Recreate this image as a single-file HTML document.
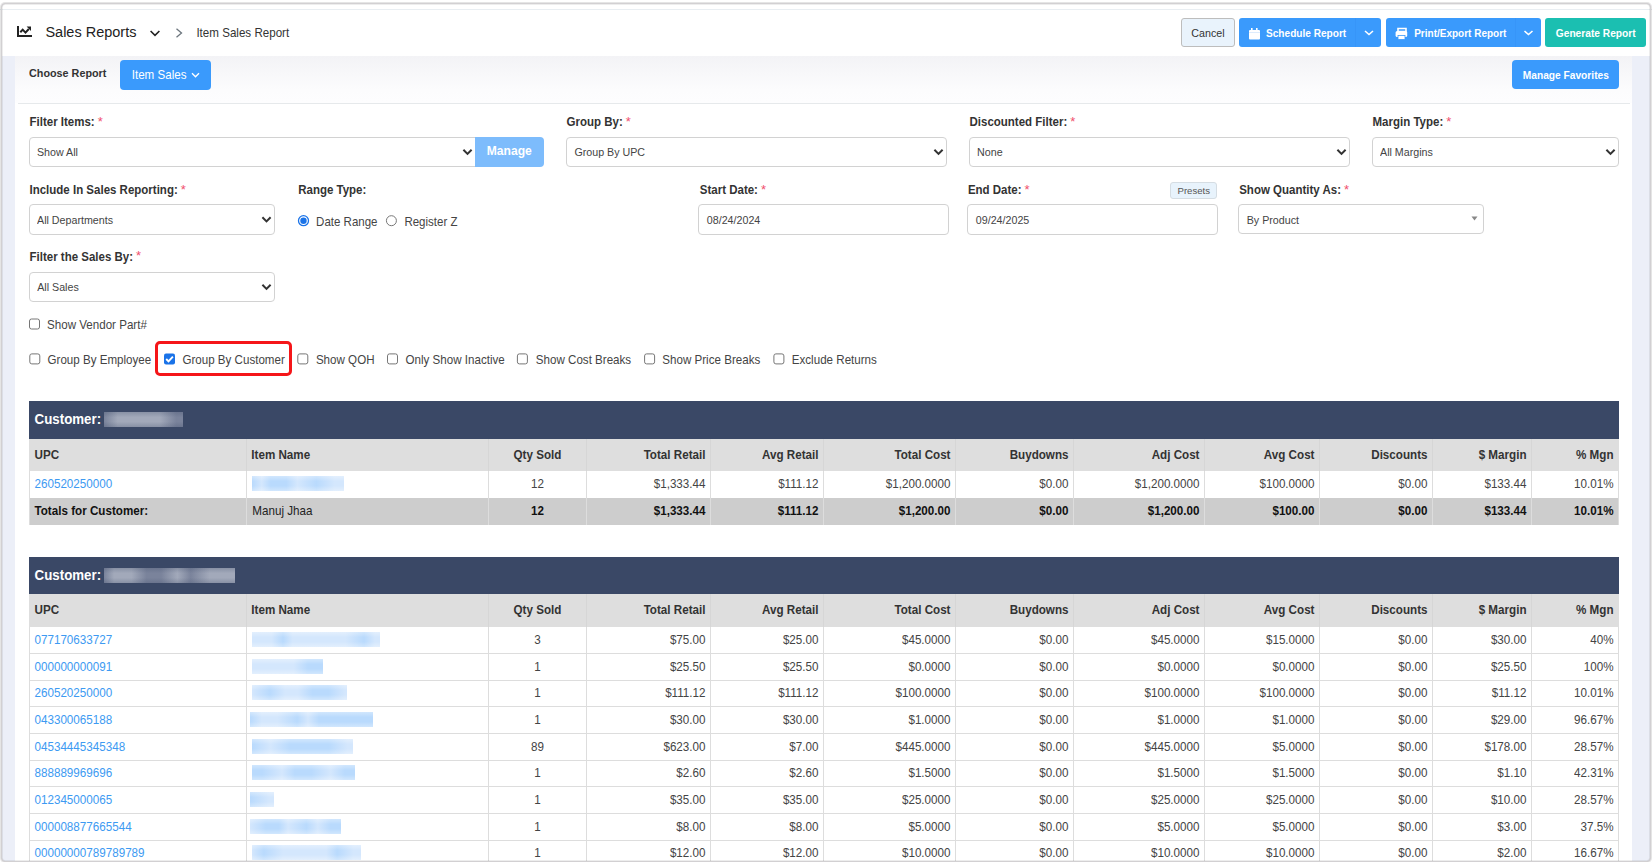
<!DOCTYPE html><html><head><meta charset="utf-8"><title>Item Sales Report</title><style>
*{box-sizing:border-box;margin:0;padding:0}
html,body{width:1652px;height:862px;overflow:hidden;background:#fff;font-family:"Liberation Sans",sans-serif}
.t{position:absolute;white-space:nowrap;line-height:1}
.r{position:absolute}
svg{position:absolute;overflow:visible}
</style></head><body>
<div class="r" style="left:2px;top:56px;width:1648px;height:805px;background:#eceff8"></div>
<div class="r" style="left:15px;top:56px;width:1617px;height:805px;background:#fff"></div>
<div class="r" style="left:15px;top:56px;width:1617px;height:47px;background:linear-gradient(#f3f3f6,#fcfcfd 72%,#fdfdfe)"></div>
<div class="r" style="left:18px;top:103px;width:1612px;height:1px;background:#e6e9eb"></div>
<div class="r" style="left:0px;top:9px;width:1652px;height:1px;background:#e9eef2"></div>
<div class="r" style="left:1px;top:3px;width:1650px;height:859px;border:1px solid #cfcdd0;border-radius:4px;"></div>
<svg style="left:0;top:0" width="1652" height="60"><path d="M18 26 V36 H32" fill="none" stroke="#222" stroke-width="2"/><path d="M20.3 32.2 L22.7 29.6 L25.5 32.6 L28.8 29" fill="none" stroke="#222" stroke-width="2"/><path d="M26.6 26.6 H31 V31 Z" fill="#222"/><path d="M150.6 31 L155 35.4 L159.4 31" fill="none" stroke="#222" stroke-width="1.6"/><path d="M176.5 28.8 L181.5 33 L176.5 37.2" fill="none" stroke="#6c757d" stroke-width="1.3"/></svg>
<div class="t" style="left:45.40px;top:24px;font-size:14.5px;line-height:16px;color:#222;transform:scaleY(1.060);transform-origin:0 13px;">Sales Reports</div>
<div class="t" style="left:196.40px;top:27px;font-size:11.6px;line-height:12px;color:#333;transform:scaleY(1.084);transform-origin:0 10px;">Item Sales Report</div>
<div class="r" style="left:1181px;top:18px;width:54px;height:29px;background:#e9f3fc;border:1px solid #bdbdbd;border-radius:3px"></div>
<div class="t" style="left:1191.30px;top:27px;font-size:10.7px;line-height:12px;color:#333;transform:scaleY(1.044);transform-origin:0 10px;">Cancel</div>
<div class="r" style="left:1239px;top:18px;width:142px;height:29px;background:#3a9afc;border-radius:3px"></div>
<div class="r" style="left:1355px;top:18px;width:1px;height:29px;background:#3795f8"></div>
<div class="t" style="left:1266.00px;top:28px;font-size:10.1px;line-height:11px;color:#fff;font-weight:bold;transform:scaleY(1.106);transform-origin:0 9px;">Schedule Report</div>
<div class="r" style="left:1386px;top:18px;width:155px;height:29px;background:#3a9afc;border-radius:3px"></div>
<div class="r" style="left:1515px;top:18px;width:1px;height:29px;background:#3795f8"></div>
<div class="t" style="left:1414.20px;top:28px;font-size:10.0px;line-height:11px;color:#fff;font-weight:bold;transform:scaleY(1.117);transform-origin:0 9px;">Print/Export Report</div>
<div class="r" style="left:1545px;top:18px;width:101px;height:29px;background:#1bbfb1;border-radius:3px"></div>
<div class="t" style="left:1555.80px;top:28px;font-size:10.2px;line-height:11px;color:#fff;font-weight:bold;transform:scaleY(1.095);transform-origin:0 9px;">Generate Report</div>
<svg style="left:0;top:0" width="1652" height="60"><rect x="1249" y="30" width="11" height="9.5" rx="1" fill="#fff"/><rect x="1251" y="28" width="1.6" height="3" fill="#fff"/><rect x="1256" y="28" width="1.6" height="3" fill="#fff"/><rect x="1249" y="32" width="11" height="0.7" fill="#cfe4fd"/><path d="M1365 31 L1369 34.5 L1373 31" fill="none" stroke="#fff" stroke-width="1.6"/><path d="M1398 28.5 h8 v3 h-8z" fill="none" stroke="#fff" stroke-width="1.6"/><rect x="1395.6" y="31" width="11.6" height="6" rx="1.5" fill="#fff"/><rect x="1398" y="35.5" width="7" height="4" fill="#fff" stroke="#3a9afc" stroke-width="0.8"/><path d="M1524.5 31 L1528.5 34.5 L1532.5 31" fill="none" stroke="#fff" stroke-width="1.6"/></svg>
<div class="t" style="left:29.00px;top:67px;font-size:10.8px;line-height:12px;color:#333;font-weight:bold;transform:scaleY(1.035);transform-origin:0 10px;">Choose Report</div>
<div class="r" style="left:120px;top:60px;width:91px;height:30px;background:#3a9afc;border-radius:4px"></div>
<div class="t" style="left:131.70px;top:69px;font-size:11.6px;line-height:12px;color:#fff;transform:scaleY(1.084);transform-origin:0 10px;">Item Sales</div>
<svg style="left:0;top:0" width="400" height="100"><path d="M192 73.3 L195.5 76.7 L199 73.3" fill="none" stroke="#fff" stroke-width="1.4"/></svg>
<div class="r" style="left:1512px;top:60px;width:107px;height:29px;background:#3a9afc;border-radius:4px"></div>
<div class="t" style="left:1522.80px;top:70px;font-size:10.2px;line-height:11px;color:#fff;font-weight:bold;transform:scaleY(1.095);transform-origin:0 9px;">Manage Favorites</div>
<div class="t" style="left:29.50px;top:116px;font-size:11.5px;line-height:12px;color:#333;font-weight:bold;transform:scaleY(1.093);transform-origin:0 10px;">Filter Items:</div>
<div class="t" style="left:97.68px;top:114px;font-size:13px;line-height:15px;color:#f0506e;transform:scaleY(1.074);transform-origin:0 12px;transform:none">*</div>
<div class="t" style="left:566.50px;top:116px;font-size:11.5px;line-height:12px;color:#333;font-weight:bold;transform:scaleY(1.093);transform-origin:0 10px;">Group By:</div>
<div class="t" style="left:625.72px;top:114px;font-size:13px;line-height:15px;color:#f0506e;transform:scaleY(1.074);transform-origin:0 12px;transform:none">*</div>
<div class="t" style="left:969.50px;top:116px;font-size:11.5px;line-height:12px;color:#333;font-weight:bold;transform:scaleY(1.093);transform-origin:0 10px;">Discounted Filter:</div>
<div class="t" style="left:1070.26px;top:114px;font-size:13px;line-height:15px;color:#f0506e;transform:scaleY(1.074);transform-origin:0 12px;transform:none">*</div>
<div class="t" style="left:1372.50px;top:116px;font-size:11.5px;line-height:12px;color:#333;font-weight:bold;transform:scaleY(1.093);transform-origin:0 10px;">Margin Type:</div>
<div class="t" style="left:1446.21px;top:114px;font-size:13px;line-height:15px;color:#f0506e;transform:scaleY(1.074);transform-origin:0 12px;transform:none">*</div>
<div class="t" style="left:29.50px;top:184px;font-size:11.5px;line-height:12px;color:#333;font-weight:bold;transform:scaleY(1.093);transform-origin:0 10px;">Include In Sales Reporting:</div>
<div class="t" style="left:180.74px;top:182px;font-size:13px;line-height:15px;color:#f0506e;transform:scaleY(1.074);transform-origin:0 12px;transform:none">*</div>
<div class="t" style="left:298.20px;top:184px;font-size:11.5px;line-height:12px;color:#333;font-weight:bold;transform:scaleY(1.093);transform-origin:0 10px;">Range Type:</div>
<div class="t" style="left:699.80px;top:184px;font-size:11.5px;line-height:12px;color:#333;font-weight:bold;transform:scaleY(1.093);transform-origin:0 10px;">Start Date:</div>
<div class="t" style="left:760.95px;top:182px;font-size:13px;line-height:15px;color:#f0506e;transform:scaleY(1.074);transform-origin:0 12px;transform:none">*</div>
<div class="t" style="left:967.90px;top:184px;font-size:11.5px;line-height:12px;color:#333;font-weight:bold;transform:scaleY(1.093);transform-origin:0 10px;">End Date:</div>
<div class="t" style="left:1024.57px;top:182px;font-size:13px;line-height:15px;color:#f0506e;transform:scaleY(1.074);transform-origin:0 12px;transform:none">*</div>
<div class="t" style="left:1239.20px;top:184px;font-size:11.5px;line-height:12px;color:#333;font-weight:bold;transform:scaleY(1.093);transform-origin:0 10px;">Show Quantity As:</div>
<div class="t" style="left:1344.00px;top:182px;font-size:13px;line-height:15px;color:#f0506e;transform:scaleY(1.074);transform-origin:0 12px;transform:none">*</div>
<div class="t" style="left:29.50px;top:251px;font-size:11.5px;line-height:12px;color:#333;font-weight:bold;transform:scaleY(1.093);transform-origin:0 10px;">Filter the Sales By:</div>
<div class="t" style="left:136.03px;top:248px;font-size:13px;line-height:15px;color:#f0506e;transform:scaleY(1.074);transform-origin:0 12px;transform:none">*</div>
<div class="r" style="left:29px;top:137px;width:447px;height:30px;background:#fff;border:1px solid #d2d2d2;border-radius:4px;border-radius:4px 0 0 4px"></div>
<div class="t" style="left:36.90px;top:146px;font-size:10.7px;line-height:12px;color:#444;transform:scaleY(1.044);transform-origin:0 10px;">Show All</div>
<div class="r" style="left:475px;top:137px;width:69px;height:30px;background:#7dbcfc;border-radius:0 4px 4px 0"></div>
<div class="t" style="left:486.80px;top:144px;font-size:12.1px;line-height:14px;color:#fff;font-weight:bold;transform:scaleY(1.039);transform-origin:0 11px;">Manage</div>
<div class="r" style="left:566px;top:137px;width:381px;height:30px;background:#fff;border:1px solid #d2d2d2;border-radius:4px;border-radius:4px"></div>
<div class="t" style="left:574.40px;top:146px;font-size:10.7px;line-height:12px;color:#444;transform:scaleY(1.044);transform-origin:0 10px;">Group By UPC</div>
<div class="r" style="left:969px;top:137px;width:381px;height:30px;background:#fff;border:1px solid #d2d2d2;border-radius:4px;border-radius:4px"></div>
<div class="t" style="left:977.10px;top:146px;font-size:10.7px;line-height:12px;color:#444;transform:scaleY(1.044);transform-origin:0 10px;">None</div>
<div class="r" style="left:1372px;top:137px;width:247px;height:30px;background:#fff;border:1px solid #d2d2d2;border-radius:4px;border-radius:4px"></div>
<div class="t" style="left:1380.00px;top:146px;font-size:10.7px;line-height:12px;color:#444;transform:scaleY(1.044);transform-origin:0 10px;">All Margins</div>
<div class="r" style="left:29px;top:204px;width:246px;height:31px;background:#fff;border:1px solid #d2d2d2;border-radius:4px;border-radius:4px"></div>
<div class="t" style="left:37.00px;top:214px;font-size:10.7px;line-height:12px;color:#444;transform:scaleY(1.044);transform-origin:0 10px;">All Departments</div>
<div class="r" style="left:1238px;top:204px;width:246px;height:29.5px;background:#fff;border:1px solid #d2d2d2;border-radius:4px;border-radius:4px"></div>
<div class="t" style="left:1246.70px;top:214px;font-size:10.7px;line-height:12px;color:#444;transform:scaleY(1.044);transform-origin:0 10px;">By Product</div>
<div class="r" style="left:698px;top:204px;width:251px;height:31px;background:#fff;border:1px solid #d2d2d2;border-radius:4px"></div>
<div class="t" style="left:706.80px;top:214px;font-size:10.7px;line-height:12px;color:#444;transform:scaleY(1.044);transform-origin:0 10px;">08/24/2024</div>
<div class="r" style="left:967px;top:204px;width:251px;height:31px;background:#fff;border:1px solid #d2d2d2;border-radius:4px"></div>
<div class="t" style="left:975.80px;top:214px;font-size:10.7px;line-height:12px;color:#444;transform:scaleY(1.044);transform-origin:0 10px;">09/24/2025</div>
<div class="r" style="left:1170px;top:182px;width:47px;height:16.5px;background:#e8f3fc;border:1px solid #d5dde3;border-radius:3px"></div>
<div class="t" style="left:1177.50px;top:185px;font-size:9.6px;line-height:11px;color:#555;transform:scaleY(1.018);transform-origin:0 9px;">Presets</div>
<div class="r" style="left:29px;top:272px;width:246px;height:30px;background:#fff;border:1px solid #d2d2d2;border-radius:4px;border-radius:4px"></div>
<div class="t" style="left:37.20px;top:281px;font-size:10.7px;line-height:12px;color:#444;transform:scaleY(1.044);transform-origin:0 10px;">All Sales</div>
<div class="t" style="left:316.10px;top:216px;font-size:11.5px;line-height:12px;color:#444;transform:scaleY(1.093);transform-origin:0 10px;">Date Range</div>
<div class="t" style="left:404.40px;top:216px;font-size:11.5px;line-height:12px;color:#444;transform:scaleY(1.093);transform-origin:0 10px;">Register Z</div>
<div class="t" style="left:47.00px;top:319px;font-size:11.6px;line-height:12px;color:#444;transform:scaleY(1.084);transform-origin:0 10px;">Show Vendor Part#</div>
<div class="t" style="left:47.50px;top:354px;font-size:11.6px;line-height:12px;color:#444;transform:scaleY(1.084);transform-origin:0 10px;">Group By Employee</div>
<div class="t" style="left:182.40px;top:354px;font-size:11.6px;line-height:12px;color:#444;transform:scaleY(1.084);transform-origin:0 10px;">Group By Customer</div>
<div class="t" style="left:315.90px;top:354px;font-size:11.6px;line-height:12px;color:#444;transform:scaleY(1.084);transform-origin:0 10px;">Show QOH</div>
<div class="t" style="left:405.50px;top:354px;font-size:11.6px;line-height:12px;color:#444;transform:scaleY(1.084);transform-origin:0 10px;">Only Show Inactive</div>
<div class="t" style="left:535.80px;top:354px;font-size:11.6px;line-height:12px;color:#444;transform:scaleY(1.084);transform-origin:0 10px;">Show Cost Breaks</div>
<div class="t" style="left:662.30px;top:354px;font-size:11.6px;line-height:12px;color:#444;transform:scaleY(1.084);transform-origin:0 10px;">Show Price Breaks</div>
<div class="t" style="left:791.80px;top:354px;font-size:11.6px;line-height:12px;color:#444;transform:scaleY(1.084);transform-origin:0 10px;">Exclude Returns</div>
<div class="r" style="left:154.5px;top:341.4px;width:137.7px;height:35.0px;border:3.4px solid #f51619;border-radius:5px"></div>
<svg style="left:0;top:0" width="1652" height="400"><path d="M463.4 149.8 L467.5 153.9 L471.6 149.8" fill="none" stroke="#333" stroke-width="2"/><path d="M934.4 149.8 L938.5 153.9 L942.6 149.8" fill="none" stroke="#333" stroke-width="2"/><path d="M1337.4 149.8 L1341.5 153.9 L1345.6 149.8" fill="none" stroke="#333" stroke-width="2"/><path d="M1606.4 149.8 L1610.5 153.9 L1614.6 149.8" fill="none" stroke="#333" stroke-width="2"/><path d="M262.4 217.3 L266.5 221.4 L270.6 217.3" fill="none" stroke="#333" stroke-width="2"/><path d="M1471.5 216.4 H1477.5 L1474.5 220.4Z" fill="#888"/><path d="M262.4 284.8 L266.5 288.9 L270.6 284.8" fill="none" stroke="#333" stroke-width="2"/><circle cx="303.5" cy="220.7" r="5" fill="#fff" stroke="#1a73e8" stroke-width="1.3"/><circle cx="303.5" cy="220.7" r="3.2" fill="#1a73e8"/><circle cx="391.4" cy="220.7" r="5" fill="#fff" stroke="#777" stroke-width="1"/><rect x="29.5" y="319.0" width="10" height="10" rx="2" fill="#fff" stroke="#767676" stroke-width="1"/><rect x="29.8" y="353.9" width="10" height="10" rx="2" fill="#fff" stroke="#767676" stroke-width="1"/><rect x="164" y="353.4" width="11" height="11" rx="2" fill="#1a73e8"/><path d="M166.2 359.0 L168.5 361.3 L172.9 356.6" fill="none" stroke="#fff" stroke-width="1.9"/><rect x="297.8" y="353.9" width="10" height="10" rx="2" fill="#fff" stroke="#767676" stroke-width="1"/><rect x="387.5" y="353.9" width="10" height="10" rx="2" fill="#fff" stroke="#767676" stroke-width="1"/><rect x="517.4" y="353.9" width="10" height="10" rx="2" fill="#fff" stroke="#767676" stroke-width="1"/><rect x="644.6" y="353.9" width="10" height="10" rx="2" fill="#fff" stroke="#767676" stroke-width="1"/><rect x="773.9" y="353.9" width="10" height="10" rx="2" fill="#fff" stroke="#767676" stroke-width="1"/></svg>
<div class="r" style="left:29px;top:401px;width:1590px;height:38px;background:#3a4866"></div>
<div class="t" style="left:34.60px;top:412px;font-size:13.3px;line-height:15px;color:#fff;font-weight:bold;transform:scaleY(1.050);transform-origin:0 12px;">Customer:</div>
<div class="r" style="left:104px;top:412px;width:79px;height:15px;background:linear-gradient(rgba(58,72,102,0.25),rgba(255,255,255,0) 35%,rgba(255,255,255,0) 65%,rgba(58,72,102,0.25)),linear-gradient(90deg,#7a839b 0.0px,#a2a9ba 13.7px,#a2a9ba 31.4px,#a2a9ba 44.8px,#a2a9ba 55.8px,#7a839b 72.2px)"></div>
<div class="r" style="left:29px;top:439px;width:1590px;height:32px;background:#dedede"></div>
<div class="r" style="left:246px;top:439px;width:1px;height:32px;background:#d6d6d6"></div>
<div class="r" style="left:488px;top:439px;width:1px;height:32px;background:#d6d6d6"></div>
<div class="r" style="left:586px;top:439px;width:1px;height:32px;background:#d6d6d6"></div>
<div class="r" style="left:710px;top:439px;width:1px;height:32px;background:#d6d6d6"></div>
<div class="r" style="left:823px;top:439px;width:1px;height:32px;background:#d6d6d6"></div>
<div class="r" style="left:955px;top:439px;width:1px;height:32px;background:#d6d6d6"></div>
<div class="r" style="left:1073px;top:439px;width:1px;height:32px;background:#d6d6d6"></div>
<div class="r" style="left:1204px;top:439px;width:1px;height:32px;background:#d6d6d6"></div>
<div class="r" style="left:1319px;top:439px;width:1px;height:32px;background:#d6d6d6"></div>
<div class="r" style="left:1432px;top:439px;width:1px;height:32px;background:#d6d6d6"></div>
<div class="r" style="left:1531px;top:439px;width:1px;height:32px;background:#d6d6d6"></div>
<div class="t" style="left:34.50px;top:448px;font-size:11.65px;line-height:13px;color:#333;font-weight:bold;transform:scaleY(1.079);transform-origin:0 11px;">UPC</div>
<div class="t" style="left:251.30px;top:448px;font-size:11.65px;line-height:13px;color:#333;font-weight:bold;transform:scaleY(1.079);transform-origin:0 11px;">Item Name</div>
<div class="t" style="left:337.50px;width:400px;text-align:center;top:448px;font-size:11.65px;line-height:13px;color:#333;font-weight:bold;transform:scaleY(1.079);transform-origin:0 11px;">Qty Sold</div>
<div class="t" style="left:305.50px;width:400px;text-align:right;top:448px;font-size:11.65px;line-height:13px;color:#333;font-weight:bold;transform:scaleY(1.079);transform-origin:0 11px;">Total Retail</div>
<div class="t" style="left:418.50px;width:400px;text-align:right;top:448px;font-size:11.65px;line-height:13px;color:#333;font-weight:bold;transform:scaleY(1.079);transform-origin:0 11px;">Avg Retail</div>
<div class="t" style="left:550.50px;width:400px;text-align:right;top:448px;font-size:11.65px;line-height:13px;color:#333;font-weight:bold;transform:scaleY(1.079);transform-origin:0 11px;">Total Cost</div>
<div class="t" style="left:668.50px;width:400px;text-align:right;top:448px;font-size:11.65px;line-height:13px;color:#333;font-weight:bold;transform:scaleY(1.079);transform-origin:0 11px;">Buydowns</div>
<div class="t" style="left:799.50px;width:400px;text-align:right;top:448px;font-size:11.65px;line-height:13px;color:#333;font-weight:bold;transform:scaleY(1.079);transform-origin:0 11px;">Adj Cost</div>
<div class="t" style="left:914.50px;width:400px;text-align:right;top:448px;font-size:11.65px;line-height:13px;color:#333;font-weight:bold;transform:scaleY(1.079);transform-origin:0 11px;">Avg Cost</div>
<div class="t" style="left:1027.50px;width:400px;text-align:right;top:448px;font-size:11.65px;line-height:13px;color:#333;font-weight:bold;transform:scaleY(1.079);transform-origin:0 11px;">Discounts</div>
<div class="t" style="left:1126.50px;width:400px;text-align:right;top:448px;font-size:11.65px;line-height:13px;color:#333;font-weight:bold;transform:scaleY(1.079);transform-origin:0 11px;">$ Margin</div>
<div class="t" style="left:1213.50px;width:400px;text-align:right;top:448px;font-size:11.65px;line-height:13px;color:#333;font-weight:bold;transform:scaleY(1.079);transform-origin:0 11px;">% Mgn</div>
<div class="r" style="left:29px;top:471px;width:1590px;height:27.0px;background:#fff"></div>
<div class="t" style="left:34.50px;top:477px;font-size:11.65px;line-height:13px;color:#3d9af2;transform:scaleY(1.079);transform-origin:0 11px;">260520250000</div>
<div class="t" style="left:252.00px;top:477px;font-size:11.65px;line-height:13px;color:#444;transform:scaleY(1.079);transform-origin:0 11px;"></div>
<div class="t" style="left:337.50px;width:400px;text-align:center;top:477px;font-size:11.65px;line-height:13px;color:#444;transform:scaleY(1.079);transform-origin:0 11px;">12</div>
<div class="t" style="left:305.50px;width:400px;text-align:right;top:477px;font-size:11.65px;line-height:13px;color:#444;transform:scaleY(1.079);transform-origin:0 11px;">$1,333.44</div>
<div class="t" style="left:418.50px;width:400px;text-align:right;top:477px;font-size:11.65px;line-height:13px;color:#444;transform:scaleY(1.079);transform-origin:0 11px;">$111.12</div>
<div class="t" style="left:550.50px;width:400px;text-align:right;top:477px;font-size:11.65px;line-height:13px;color:#444;transform:scaleY(1.079);transform-origin:0 11px;">$1,200.0000</div>
<div class="t" style="left:668.50px;width:400px;text-align:right;top:477px;font-size:11.65px;line-height:13px;color:#444;transform:scaleY(1.079);transform-origin:0 11px;">$0.00</div>
<div class="t" style="left:799.50px;width:400px;text-align:right;top:477px;font-size:11.65px;line-height:13px;color:#444;transform:scaleY(1.079);transform-origin:0 11px;">$1,200.0000</div>
<div class="t" style="left:914.50px;width:400px;text-align:right;top:477px;font-size:11.65px;line-height:13px;color:#444;transform:scaleY(1.079);transform-origin:0 11px;">$100.0000</div>
<div class="t" style="left:1027.50px;width:400px;text-align:right;top:477px;font-size:11.65px;line-height:13px;color:#444;transform:scaleY(1.079);transform-origin:0 11px;">$0.00</div>
<div class="t" style="left:1126.50px;width:400px;text-align:right;top:477px;font-size:11.65px;line-height:13px;color:#444;transform:scaleY(1.079);transform-origin:0 11px;">$133.44</div>
<div class="t" style="left:1213.50px;width:400px;text-align:right;top:477px;font-size:11.65px;line-height:13px;color:#444;transform:scaleY(1.079);transform-origin:0 11px;">10.01%</div>
<div class="r" style="left:252px;top:476px;width:92px;height:15px;background:linear-gradient(rgba(255,255,255,0.35),rgba(255,255,255,0) 35%,rgba(255,255,255,0) 65%,rgba(255,255,255,0.35)),linear-gradient(90deg,#b9dafd 0.0px,#d4e7fd 9.7px,#b9dafd 18.8px,#b9dafd 34.3px,#d4e7fd 45.5px,#b9dafd 64.4px,#d4e7fd 82.5px)"></div>
<div class="r" style="left:29px;top:498.0px;width:1590px;height:26.5px;background:#cdcdcd"></div>
<div class="t" style="left:34.50px;top:504px;font-size:11.65px;line-height:13px;color:#111;font-weight:bold;transform:scaleY(1.079);transform-origin:0 11px;">Totals for Customer:</div>
<div class="t" style="left:337.50px;width:400px;text-align:center;top:504px;font-size:11.65px;line-height:13px;color:#111;font-weight:bold;transform:scaleY(1.079);transform-origin:0 11px;">12</div>
<div class="t" style="left:305.50px;width:400px;text-align:right;top:504px;font-size:11.65px;line-height:13px;color:#111;font-weight:bold;transform:scaleY(1.079);transform-origin:0 11px;">$1,333.44</div>
<div class="t" style="left:418.50px;width:400px;text-align:right;top:504px;font-size:11.65px;line-height:13px;color:#111;font-weight:bold;transform:scaleY(1.079);transform-origin:0 11px;">$111.12</div>
<div class="t" style="left:550.50px;width:400px;text-align:right;top:504px;font-size:11.65px;line-height:13px;color:#111;font-weight:bold;transform:scaleY(1.079);transform-origin:0 11px;">$1,200.00</div>
<div class="t" style="left:668.50px;width:400px;text-align:right;top:504px;font-size:11.65px;line-height:13px;color:#111;font-weight:bold;transform:scaleY(1.079);transform-origin:0 11px;">$0.00</div>
<div class="t" style="left:799.50px;width:400px;text-align:right;top:504px;font-size:11.65px;line-height:13px;color:#111;font-weight:bold;transform:scaleY(1.079);transform-origin:0 11px;">$1,200.00</div>
<div class="t" style="left:914.50px;width:400px;text-align:right;top:504px;font-size:11.65px;line-height:13px;color:#111;font-weight:bold;transform:scaleY(1.079);transform-origin:0 11px;">$100.00</div>
<div class="t" style="left:1027.50px;width:400px;text-align:right;top:504px;font-size:11.65px;line-height:13px;color:#111;font-weight:bold;transform:scaleY(1.079);transform-origin:0 11px;">$0.00</div>
<div class="t" style="left:1126.50px;width:400px;text-align:right;top:504px;font-size:11.65px;line-height:13px;color:#111;font-weight:bold;transform:scaleY(1.079);transform-origin:0 11px;">$133.44</div>
<div class="t" style="left:1213.50px;width:400px;text-align:right;top:504px;font-size:11.65px;line-height:13px;color:#111;font-weight:bold;transform:scaleY(1.079);transform-origin:0 11px;">10.01%</div>
<div class="r" style="left:246px;top:471px;width:1px;height:53.5px;background:#dddddd"></div>
<div class="r" style="left:488px;top:471px;width:1px;height:53.5px;background:#dddddd"></div>
<div class="r" style="left:586px;top:471px;width:1px;height:53.5px;background:#dddddd"></div>
<div class="r" style="left:710px;top:471px;width:1px;height:53.5px;background:#dddddd"></div>
<div class="r" style="left:823px;top:471px;width:1px;height:53.5px;background:#dddddd"></div>
<div class="r" style="left:955px;top:471px;width:1px;height:53.5px;background:#dddddd"></div>
<div class="r" style="left:1073px;top:471px;width:1px;height:53.5px;background:#dddddd"></div>
<div class="r" style="left:1204px;top:471px;width:1px;height:53.5px;background:#dddddd"></div>
<div class="r" style="left:1319px;top:471px;width:1px;height:53.5px;background:#dddddd"></div>
<div class="r" style="left:1432px;top:471px;width:1px;height:53.5px;background:#dddddd"></div>
<div class="r" style="left:1531px;top:471px;width:1px;height:53.5px;background:#dddddd"></div>
<div class="r" style="left:29px;top:471px;width:1px;height:53.5px;background:#dddddd"></div>
<div class="r" style="left:1618px;top:471px;width:1px;height:53.5px;background:#dddddd"></div>
<div class="t" style="left:252.30px;top:504px;font-size:11.65px;line-height:13px;color:#222;transform:scaleY(1.079);transform-origin:0 11px;">Manuj Jhaa</div>
<div class="r" style="left:29px;top:557px;width:1590px;height:37px;background:#3a4866"></div>
<div class="t" style="left:34.60px;top:568px;font-size:13.3px;line-height:15px;color:#fff;font-weight:bold;transform:scaleY(1.050);transform-origin:0 12px;">Customer:</div>
<div class="r" style="left:104px;top:568px;width:131px;height:15px;background:linear-gradient(rgba(58,72,102,0.25),rgba(255,255,255,0) 35%,rgba(255,255,255,0) 65%,rgba(58,72,102,0.25)),linear-gradient(90deg,#7a839b 0.0px,#a2a9ba 10.1px,#a2a9ba 27.6px,#7a839b 42.5px,#7a839b 57.1px,#a2a9ba 73.4px,#7a839b 86.7px,#a2a9ba 105.6px,#a2a9ba 125.6px)"></div>
<div class="r" style="left:29px;top:594px;width:1590px;height:33px;background:#dedede"></div>
<div class="r" style="left:246px;top:594px;width:1px;height:33px;background:#d6d6d6"></div>
<div class="r" style="left:488px;top:594px;width:1px;height:33px;background:#d6d6d6"></div>
<div class="r" style="left:586px;top:594px;width:1px;height:33px;background:#d6d6d6"></div>
<div class="r" style="left:710px;top:594px;width:1px;height:33px;background:#d6d6d6"></div>
<div class="r" style="left:823px;top:594px;width:1px;height:33px;background:#d6d6d6"></div>
<div class="r" style="left:955px;top:594px;width:1px;height:33px;background:#d6d6d6"></div>
<div class="r" style="left:1073px;top:594px;width:1px;height:33px;background:#d6d6d6"></div>
<div class="r" style="left:1204px;top:594px;width:1px;height:33px;background:#d6d6d6"></div>
<div class="r" style="left:1319px;top:594px;width:1px;height:33px;background:#d6d6d6"></div>
<div class="r" style="left:1432px;top:594px;width:1px;height:33px;background:#d6d6d6"></div>
<div class="r" style="left:1531px;top:594px;width:1px;height:33px;background:#d6d6d6"></div>
<div class="t" style="left:34.50px;top:603px;font-size:11.65px;line-height:13px;color:#333;font-weight:bold;transform:scaleY(1.079);transform-origin:0 11px;">UPC</div>
<div class="t" style="left:251.30px;top:603px;font-size:11.65px;line-height:13px;color:#333;font-weight:bold;transform:scaleY(1.079);transform-origin:0 11px;">Item Name</div>
<div class="t" style="left:337.50px;width:400px;text-align:center;top:603px;font-size:11.65px;line-height:13px;color:#333;font-weight:bold;transform:scaleY(1.079);transform-origin:0 11px;">Qty Sold</div>
<div class="t" style="left:305.50px;width:400px;text-align:right;top:603px;font-size:11.65px;line-height:13px;color:#333;font-weight:bold;transform:scaleY(1.079);transform-origin:0 11px;">Total Retail</div>
<div class="t" style="left:418.50px;width:400px;text-align:right;top:603px;font-size:11.65px;line-height:13px;color:#333;font-weight:bold;transform:scaleY(1.079);transform-origin:0 11px;">Avg Retail</div>
<div class="t" style="left:550.50px;width:400px;text-align:right;top:603px;font-size:11.65px;line-height:13px;color:#333;font-weight:bold;transform:scaleY(1.079);transform-origin:0 11px;">Total Cost</div>
<div class="t" style="left:668.50px;width:400px;text-align:right;top:603px;font-size:11.65px;line-height:13px;color:#333;font-weight:bold;transform:scaleY(1.079);transform-origin:0 11px;">Buydowns</div>
<div class="t" style="left:799.50px;width:400px;text-align:right;top:603px;font-size:11.65px;line-height:13px;color:#333;font-weight:bold;transform:scaleY(1.079);transform-origin:0 11px;">Adj Cost</div>
<div class="t" style="left:914.50px;width:400px;text-align:right;top:603px;font-size:11.65px;line-height:13px;color:#333;font-weight:bold;transform:scaleY(1.079);transform-origin:0 11px;">Avg Cost</div>
<div class="t" style="left:1027.50px;width:400px;text-align:right;top:603px;font-size:11.65px;line-height:13px;color:#333;font-weight:bold;transform:scaleY(1.079);transform-origin:0 11px;">Discounts</div>
<div class="t" style="left:1126.50px;width:400px;text-align:right;top:603px;font-size:11.65px;line-height:13px;color:#333;font-weight:bold;transform:scaleY(1.079);transform-origin:0 11px;">$ Margin</div>
<div class="t" style="left:1213.50px;width:400px;text-align:right;top:603px;font-size:11.65px;line-height:13px;color:#333;font-weight:bold;transform:scaleY(1.079);transform-origin:0 11px;">% Mgn</div>
<div class="r" style="left:29px;top:627px;width:1590px;height:26.66999999999996px;background:#fff"></div>
<div class="t" style="left:34.50px;top:633px;font-size:11.65px;line-height:13px;color:#3d9af2;transform:scaleY(1.079);transform-origin:0 11px;">077170633727</div>
<div class="t" style="left:252.00px;top:633px;font-size:11.65px;line-height:13px;color:#444;transform:scaleY(1.079);transform-origin:0 11px;"></div>
<div class="t" style="left:337.50px;width:400px;text-align:center;top:633px;font-size:11.65px;line-height:13px;color:#444;transform:scaleY(1.079);transform-origin:0 11px;">3</div>
<div class="t" style="left:305.50px;width:400px;text-align:right;top:633px;font-size:11.65px;line-height:13px;color:#444;transform:scaleY(1.079);transform-origin:0 11px;">$75.00</div>
<div class="t" style="left:418.50px;width:400px;text-align:right;top:633px;font-size:11.65px;line-height:13px;color:#444;transform:scaleY(1.079);transform-origin:0 11px;">$25.00</div>
<div class="t" style="left:550.50px;width:400px;text-align:right;top:633px;font-size:11.65px;line-height:13px;color:#444;transform:scaleY(1.079);transform-origin:0 11px;">$45.0000</div>
<div class="t" style="left:668.50px;width:400px;text-align:right;top:633px;font-size:11.65px;line-height:13px;color:#444;transform:scaleY(1.079);transform-origin:0 11px;">$0.00</div>
<div class="t" style="left:799.50px;width:400px;text-align:right;top:633px;font-size:11.65px;line-height:13px;color:#444;transform:scaleY(1.079);transform-origin:0 11px;">$45.0000</div>
<div class="t" style="left:914.50px;width:400px;text-align:right;top:633px;font-size:11.65px;line-height:13px;color:#444;transform:scaleY(1.079);transform-origin:0 11px;">$15.0000</div>
<div class="t" style="left:1027.50px;width:400px;text-align:right;top:633px;font-size:11.65px;line-height:13px;color:#444;transform:scaleY(1.079);transform-origin:0 11px;">$0.00</div>
<div class="t" style="left:1126.50px;width:400px;text-align:right;top:633px;font-size:11.65px;line-height:13px;color:#444;transform:scaleY(1.079);transform-origin:0 11px;">$30.00</div>
<div class="t" style="left:1213.50px;width:400px;text-align:right;top:633px;font-size:11.65px;line-height:13px;color:#444;transform:scaleY(1.079);transform-origin:0 11px;">40%</div>
<div class="r" style="left:252px;top:632px;width:128px;height:15px;background:linear-gradient(rgba(255,255,255,0.35),rgba(255,255,255,0) 35%,rgba(255,255,255,0) 65%,rgba(255,255,255,0.35)),linear-gradient(90deg,#d4e7fd 0.0px,#d4e7fd 19.7px,#b9dafd 31.0px,#d4e7fd 40.6px,#d4e7fd 55.1px,#d4e7fd 64.8px,#d4e7fd 75.6px,#d4e7fd 93.7px,#b9dafd 112.0px,#d4e7fd 122.9px)"></div>
<div class="r" style="left:29px;top:653.67px;width:1590px;height:26.66999999999996px;background:#fff"></div>
<div class="t" style="left:34.50px;top:660px;font-size:11.65px;line-height:13px;color:#3d9af2;transform:scaleY(1.079);transform-origin:0 11px;">000000000091</div>
<div class="t" style="left:252.00px;top:660px;font-size:11.65px;line-height:13px;color:#444;transform:scaleY(1.079);transform-origin:0 11px;"></div>
<div class="t" style="left:337.50px;width:400px;text-align:center;top:660px;font-size:11.65px;line-height:13px;color:#444;transform:scaleY(1.079);transform-origin:0 11px;">1</div>
<div class="t" style="left:305.50px;width:400px;text-align:right;top:660px;font-size:11.65px;line-height:13px;color:#444;transform:scaleY(1.079);transform-origin:0 11px;">$25.50</div>
<div class="t" style="left:418.50px;width:400px;text-align:right;top:660px;font-size:11.65px;line-height:13px;color:#444;transform:scaleY(1.079);transform-origin:0 11px;">$25.50</div>
<div class="t" style="left:550.50px;width:400px;text-align:right;top:660px;font-size:11.65px;line-height:13px;color:#444;transform:scaleY(1.079);transform-origin:0 11px;">$0.0000</div>
<div class="t" style="left:668.50px;width:400px;text-align:right;top:660px;font-size:11.65px;line-height:13px;color:#444;transform:scaleY(1.079);transform-origin:0 11px;">$0.00</div>
<div class="t" style="left:799.50px;width:400px;text-align:right;top:660px;font-size:11.65px;line-height:13px;color:#444;transform:scaleY(1.079);transform-origin:0 11px;">$0.0000</div>
<div class="t" style="left:914.50px;width:400px;text-align:right;top:660px;font-size:11.65px;line-height:13px;color:#444;transform:scaleY(1.079);transform-origin:0 11px;">$0.0000</div>
<div class="t" style="left:1027.50px;width:400px;text-align:right;top:660px;font-size:11.65px;line-height:13px;color:#444;transform:scaleY(1.079);transform-origin:0 11px;">$0.00</div>
<div class="t" style="left:1126.50px;width:400px;text-align:right;top:660px;font-size:11.65px;line-height:13px;color:#444;transform:scaleY(1.079);transform-origin:0 11px;">$25.50</div>
<div class="t" style="left:1213.50px;width:400px;text-align:right;top:660px;font-size:11.65px;line-height:13px;color:#444;transform:scaleY(1.079);transform-origin:0 11px;">100%</div>
<div class="r" style="left:252px;top:659px;width:71px;height:15px;background:linear-gradient(rgba(255,255,255,0.35),rgba(255,255,255,0) 35%,rgba(255,255,255,0) 65%,rgba(255,255,255,0.35)),linear-gradient(90deg,#d4e7fd 0.0px,#d4e7fd 17.3px,#d4e7fd 32.1px,#d4e7fd 41.8px,#b9dafd 55.9px)"></div>
<div class="r" style="left:29px;top:680.3399999999999px;width:1590px;height:26.66999999999996px;background:#fff"></div>
<div class="t" style="left:34.50px;top:686px;font-size:11.65px;line-height:13px;color:#3d9af2;transform:scaleY(1.079);transform-origin:0 11px;">260520250000</div>
<div class="t" style="left:252.00px;top:686px;font-size:11.65px;line-height:13px;color:#444;transform:scaleY(1.079);transform-origin:0 11px;"></div>
<div class="t" style="left:337.50px;width:400px;text-align:center;top:686px;font-size:11.65px;line-height:13px;color:#444;transform:scaleY(1.079);transform-origin:0 11px;">1</div>
<div class="t" style="left:305.50px;width:400px;text-align:right;top:686px;font-size:11.65px;line-height:13px;color:#444;transform:scaleY(1.079);transform-origin:0 11px;">$111.12</div>
<div class="t" style="left:418.50px;width:400px;text-align:right;top:686px;font-size:11.65px;line-height:13px;color:#444;transform:scaleY(1.079);transform-origin:0 11px;">$111.12</div>
<div class="t" style="left:550.50px;width:400px;text-align:right;top:686px;font-size:11.65px;line-height:13px;color:#444;transform:scaleY(1.079);transform-origin:0 11px;">$100.0000</div>
<div class="t" style="left:668.50px;width:400px;text-align:right;top:686px;font-size:11.65px;line-height:13px;color:#444;transform:scaleY(1.079);transform-origin:0 11px;">$0.00</div>
<div class="t" style="left:799.50px;width:400px;text-align:right;top:686px;font-size:11.65px;line-height:13px;color:#444;transform:scaleY(1.079);transform-origin:0 11px;">$100.0000</div>
<div class="t" style="left:914.50px;width:400px;text-align:right;top:686px;font-size:11.65px;line-height:13px;color:#444;transform:scaleY(1.079);transform-origin:0 11px;">$100.0000</div>
<div class="t" style="left:1027.50px;width:400px;text-align:right;top:686px;font-size:11.65px;line-height:13px;color:#444;transform:scaleY(1.079);transform-origin:0 11px;">$0.00</div>
<div class="t" style="left:1126.50px;width:400px;text-align:right;top:686px;font-size:11.65px;line-height:13px;color:#444;transform:scaleY(1.079);transform-origin:0 11px;">$11.12</div>
<div class="t" style="left:1213.50px;width:400px;text-align:right;top:686px;font-size:11.65px;line-height:13px;color:#444;transform:scaleY(1.079);transform-origin:0 11px;">10.01%</div>
<div class="r" style="left:252px;top:685px;width:95px;height:15px;background:linear-gradient(rgba(255,255,255,0.35),rgba(255,255,255,0) 35%,rgba(255,255,255,0) 65%,rgba(255,255,255,0.35)),linear-gradient(90deg,#d4e7fd 0.0px,#b9dafd 17.7px,#d4e7fd 33.0px,#d4e7fd 46.1px,#b9dafd 60.5px,#b9dafd 76.6px,#d4e7fd 93.1px)"></div>
<div class="r" style="left:29px;top:707.0099999999999px;width:1590px;height:26.66999999999996px;background:#fff"></div>
<div class="t" style="left:34.50px;top:713px;font-size:11.65px;line-height:13px;color:#3d9af2;transform:scaleY(1.079);transform-origin:0 11px;">043300065188</div>
<div class="t" style="left:252.00px;top:713px;font-size:11.65px;line-height:13px;color:#444;transform:scaleY(1.079);transform-origin:0 11px;"></div>
<div class="t" style="left:337.50px;width:400px;text-align:center;top:713px;font-size:11.65px;line-height:13px;color:#444;transform:scaleY(1.079);transform-origin:0 11px;">1</div>
<div class="t" style="left:305.50px;width:400px;text-align:right;top:713px;font-size:11.65px;line-height:13px;color:#444;transform:scaleY(1.079);transform-origin:0 11px;">$30.00</div>
<div class="t" style="left:418.50px;width:400px;text-align:right;top:713px;font-size:11.65px;line-height:13px;color:#444;transform:scaleY(1.079);transform-origin:0 11px;">$30.00</div>
<div class="t" style="left:550.50px;width:400px;text-align:right;top:713px;font-size:11.65px;line-height:13px;color:#444;transform:scaleY(1.079);transform-origin:0 11px;">$1.0000</div>
<div class="t" style="left:668.50px;width:400px;text-align:right;top:713px;font-size:11.65px;line-height:13px;color:#444;transform:scaleY(1.079);transform-origin:0 11px;">$0.00</div>
<div class="t" style="left:799.50px;width:400px;text-align:right;top:713px;font-size:11.65px;line-height:13px;color:#444;transform:scaleY(1.079);transform-origin:0 11px;">$1.0000</div>
<div class="t" style="left:914.50px;width:400px;text-align:right;top:713px;font-size:11.65px;line-height:13px;color:#444;transform:scaleY(1.079);transform-origin:0 11px;">$1.0000</div>
<div class="t" style="left:1027.50px;width:400px;text-align:right;top:713px;font-size:11.65px;line-height:13px;color:#444;transform:scaleY(1.079);transform-origin:0 11px;">$0.00</div>
<div class="t" style="left:1126.50px;width:400px;text-align:right;top:713px;font-size:11.65px;line-height:13px;color:#444;transform:scaleY(1.079);transform-origin:0 11px;">$29.00</div>
<div class="t" style="left:1213.50px;width:400px;text-align:right;top:713px;font-size:11.65px;line-height:13px;color:#444;transform:scaleY(1.079);transform-origin:0 11px;">96.67%</div>
<div class="r" style="left:250px;top:712px;width:123px;height:15px;background:linear-gradient(rgba(255,255,255,0.35),rgba(255,255,255,0) 35%,rgba(255,255,255,0) 65%,rgba(255,255,255,0.35)),linear-gradient(90deg,#b9dafd 0.0px,#d4e7fd 11.8px,#d4e7fd 27.6px,#b9dafd 47.2px,#d4e7fd 58.0px,#b9dafd 69.0px,#b9dafd 81.9px,#b9dafd 96.7px,#b9dafd 107.4px)"></div>
<div class="r" style="left:29px;top:733.6799999999998px;width:1590px;height:26.66999999999996px;background:#fff"></div>
<div class="t" style="left:34.50px;top:740px;font-size:11.65px;line-height:13px;color:#3d9af2;transform:scaleY(1.079);transform-origin:0 11px;">04534445345348</div>
<div class="t" style="left:252.00px;top:740px;font-size:11.65px;line-height:13px;color:#444;transform:scaleY(1.079);transform-origin:0 11px;"></div>
<div class="t" style="left:337.50px;width:400px;text-align:center;top:740px;font-size:11.65px;line-height:13px;color:#444;transform:scaleY(1.079);transform-origin:0 11px;">89</div>
<div class="t" style="left:305.50px;width:400px;text-align:right;top:740px;font-size:11.65px;line-height:13px;color:#444;transform:scaleY(1.079);transform-origin:0 11px;">$623.00</div>
<div class="t" style="left:418.50px;width:400px;text-align:right;top:740px;font-size:11.65px;line-height:13px;color:#444;transform:scaleY(1.079);transform-origin:0 11px;">$7.00</div>
<div class="t" style="left:550.50px;width:400px;text-align:right;top:740px;font-size:11.65px;line-height:13px;color:#444;transform:scaleY(1.079);transform-origin:0 11px;">$445.0000</div>
<div class="t" style="left:668.50px;width:400px;text-align:right;top:740px;font-size:11.65px;line-height:13px;color:#444;transform:scaleY(1.079);transform-origin:0 11px;">$0.00</div>
<div class="t" style="left:799.50px;width:400px;text-align:right;top:740px;font-size:11.65px;line-height:13px;color:#444;transform:scaleY(1.079);transform-origin:0 11px;">$445.0000</div>
<div class="t" style="left:914.50px;width:400px;text-align:right;top:740px;font-size:11.65px;line-height:13px;color:#444;transform:scaleY(1.079);transform-origin:0 11px;">$5.0000</div>
<div class="t" style="left:1027.50px;width:400px;text-align:right;top:740px;font-size:11.65px;line-height:13px;color:#444;transform:scaleY(1.079);transform-origin:0 11px;">$0.00</div>
<div class="t" style="left:1126.50px;width:400px;text-align:right;top:740px;font-size:11.65px;line-height:13px;color:#444;transform:scaleY(1.079);transform-origin:0 11px;">$178.00</div>
<div class="t" style="left:1213.50px;width:400px;text-align:right;top:740px;font-size:11.65px;line-height:13px;color:#444;transform:scaleY(1.079);transform-origin:0 11px;">28.57%</div>
<div class="r" style="left:252px;top:739px;width:101px;height:15px;background:linear-gradient(rgba(255,255,255,0.35),rgba(255,255,255,0) 35%,rgba(255,255,255,0) 65%,rgba(255,255,255,0.35)),linear-gradient(90deg,#b9dafd 0.0px,#d4e7fd 18.6px,#b9dafd 38.3px,#b9dafd 51.1px,#b9dafd 67.2px,#b9dafd 76.8px,#d4e7fd 95.5px)"></div>
<div class="r" style="left:29px;top:760.3499999999998px;width:1590px;height:26.66999999999996px;background:#fff"></div>
<div class="t" style="left:34.50px;top:766px;font-size:11.65px;line-height:13px;color:#3d9af2;transform:scaleY(1.079);transform-origin:0 11px;">888889969696</div>
<div class="t" style="left:252.00px;top:766px;font-size:11.65px;line-height:13px;color:#444;transform:scaleY(1.079);transform-origin:0 11px;"></div>
<div class="t" style="left:337.50px;width:400px;text-align:center;top:766px;font-size:11.65px;line-height:13px;color:#444;transform:scaleY(1.079);transform-origin:0 11px;">1</div>
<div class="t" style="left:305.50px;width:400px;text-align:right;top:766px;font-size:11.65px;line-height:13px;color:#444;transform:scaleY(1.079);transform-origin:0 11px;">$2.60</div>
<div class="t" style="left:418.50px;width:400px;text-align:right;top:766px;font-size:11.65px;line-height:13px;color:#444;transform:scaleY(1.079);transform-origin:0 11px;">$2.60</div>
<div class="t" style="left:550.50px;width:400px;text-align:right;top:766px;font-size:11.65px;line-height:13px;color:#444;transform:scaleY(1.079);transform-origin:0 11px;">$1.5000</div>
<div class="t" style="left:668.50px;width:400px;text-align:right;top:766px;font-size:11.65px;line-height:13px;color:#444;transform:scaleY(1.079);transform-origin:0 11px;">$0.00</div>
<div class="t" style="left:799.50px;width:400px;text-align:right;top:766px;font-size:11.65px;line-height:13px;color:#444;transform:scaleY(1.079);transform-origin:0 11px;">$1.5000</div>
<div class="t" style="left:914.50px;width:400px;text-align:right;top:766px;font-size:11.65px;line-height:13px;color:#444;transform:scaleY(1.079);transform-origin:0 11px;">$1.5000</div>
<div class="t" style="left:1027.50px;width:400px;text-align:right;top:766px;font-size:11.65px;line-height:13px;color:#444;transform:scaleY(1.079);transform-origin:0 11px;">$0.00</div>
<div class="t" style="left:1126.50px;width:400px;text-align:right;top:766px;font-size:11.65px;line-height:13px;color:#444;transform:scaleY(1.079);transform-origin:0 11px;">$1.10</div>
<div class="t" style="left:1213.50px;width:400px;text-align:right;top:766px;font-size:11.65px;line-height:13px;color:#444;transform:scaleY(1.079);transform-origin:0 11px;">42.31%</div>
<div class="r" style="left:252px;top:765px;width:103px;height:15px;background:linear-gradient(rgba(255,255,255,0.35),rgba(255,255,255,0) 35%,rgba(255,255,255,0) 65%,rgba(255,255,255,0.35)),linear-gradient(90deg,#b9dafd 0.0px,#b9dafd 10.1px,#d4e7fd 30.1px,#b9dafd 42.8px,#b9dafd 59.4px,#d4e7fd 78.7px,#b9dafd 92.8px)"></div>
<div class="r" style="left:29px;top:787.0199999999998px;width:1590px;height:26.66999999999996px;background:#fff"></div>
<div class="t" style="left:34.50px;top:793px;font-size:11.65px;line-height:13px;color:#3d9af2;transform:scaleY(1.079);transform-origin:0 11px;">012345000065</div>
<div class="t" style="left:252.00px;top:793px;font-size:11.65px;line-height:13px;color:#444;transform:scaleY(1.079);transform-origin:0 11px;"></div>
<div class="t" style="left:337.50px;width:400px;text-align:center;top:793px;font-size:11.65px;line-height:13px;color:#444;transform:scaleY(1.079);transform-origin:0 11px;">1</div>
<div class="t" style="left:305.50px;width:400px;text-align:right;top:793px;font-size:11.65px;line-height:13px;color:#444;transform:scaleY(1.079);transform-origin:0 11px;">$35.00</div>
<div class="t" style="left:418.50px;width:400px;text-align:right;top:793px;font-size:11.65px;line-height:13px;color:#444;transform:scaleY(1.079);transform-origin:0 11px;">$35.00</div>
<div class="t" style="left:550.50px;width:400px;text-align:right;top:793px;font-size:11.65px;line-height:13px;color:#444;transform:scaleY(1.079);transform-origin:0 11px;">$25.0000</div>
<div class="t" style="left:668.50px;width:400px;text-align:right;top:793px;font-size:11.65px;line-height:13px;color:#444;transform:scaleY(1.079);transform-origin:0 11px;">$0.00</div>
<div class="t" style="left:799.50px;width:400px;text-align:right;top:793px;font-size:11.65px;line-height:13px;color:#444;transform:scaleY(1.079);transform-origin:0 11px;">$25.0000</div>
<div class="t" style="left:914.50px;width:400px;text-align:right;top:793px;font-size:11.65px;line-height:13px;color:#444;transform:scaleY(1.079);transform-origin:0 11px;">$25.0000</div>
<div class="t" style="left:1027.50px;width:400px;text-align:right;top:793px;font-size:11.65px;line-height:13px;color:#444;transform:scaleY(1.079);transform-origin:0 11px;">$0.00</div>
<div class="t" style="left:1126.50px;width:400px;text-align:right;top:793px;font-size:11.65px;line-height:13px;color:#444;transform:scaleY(1.079);transform-origin:0 11px;">$10.00</div>
<div class="t" style="left:1213.50px;width:400px;text-align:right;top:793px;font-size:11.65px;line-height:13px;color:#444;transform:scaleY(1.079);transform-origin:0 11px;">28.57%</div>
<div class="r" style="left:250px;top:792px;width:24px;height:15px;background:linear-gradient(rgba(255,255,255,0.35),rgba(255,255,255,0) 35%,rgba(255,255,255,0) 65%,rgba(255,255,255,0.35)),linear-gradient(90deg,#b9dafd 0.0px,#d4e7fd 19.1px)"></div>
<div class="r" style="left:29px;top:813.6899999999997px;width:1590px;height:26.66999999999996px;background:#fff"></div>
<div class="t" style="left:34.50px;top:820px;font-size:11.65px;line-height:13px;color:#3d9af2;transform:scaleY(1.079);transform-origin:0 11px;">000008877665544</div>
<div class="t" style="left:252.00px;top:820px;font-size:11.65px;line-height:13px;color:#444;transform:scaleY(1.079);transform-origin:0 11px;"></div>
<div class="t" style="left:337.50px;width:400px;text-align:center;top:820px;font-size:11.65px;line-height:13px;color:#444;transform:scaleY(1.079);transform-origin:0 11px;">1</div>
<div class="t" style="left:305.50px;width:400px;text-align:right;top:820px;font-size:11.65px;line-height:13px;color:#444;transform:scaleY(1.079);transform-origin:0 11px;">$8.00</div>
<div class="t" style="left:418.50px;width:400px;text-align:right;top:820px;font-size:11.65px;line-height:13px;color:#444;transform:scaleY(1.079);transform-origin:0 11px;">$8.00</div>
<div class="t" style="left:550.50px;width:400px;text-align:right;top:820px;font-size:11.65px;line-height:13px;color:#444;transform:scaleY(1.079);transform-origin:0 11px;">$5.0000</div>
<div class="t" style="left:668.50px;width:400px;text-align:right;top:820px;font-size:11.65px;line-height:13px;color:#444;transform:scaleY(1.079);transform-origin:0 11px;">$0.00</div>
<div class="t" style="left:799.50px;width:400px;text-align:right;top:820px;font-size:11.65px;line-height:13px;color:#444;transform:scaleY(1.079);transform-origin:0 11px;">$5.0000</div>
<div class="t" style="left:914.50px;width:400px;text-align:right;top:820px;font-size:11.65px;line-height:13px;color:#444;transform:scaleY(1.079);transform-origin:0 11px;">$5.0000</div>
<div class="t" style="left:1027.50px;width:400px;text-align:right;top:820px;font-size:11.65px;line-height:13px;color:#444;transform:scaleY(1.079);transform-origin:0 11px;">$0.00</div>
<div class="t" style="left:1126.50px;width:400px;text-align:right;top:820px;font-size:11.65px;line-height:13px;color:#444;transform:scaleY(1.079);transform-origin:0 11px;">$3.00</div>
<div class="t" style="left:1213.50px;width:400px;text-align:right;top:820px;font-size:11.65px;line-height:13px;color:#444;transform:scaleY(1.079);transform-origin:0 11px;">37.5%</div>
<div class="r" style="left:250px;top:819px;width:91px;height:15px;background:linear-gradient(rgba(255,255,255,0.35),rgba(255,255,255,0) 35%,rgba(255,255,255,0) 65%,rgba(255,255,255,0.35)),linear-gradient(90deg,#d4e7fd 0.0px,#b9dafd 15.8px,#b9dafd 28.9px,#d4e7fd 38.1px,#b9dafd 56.4px,#d4e7fd 67.9px,#b9dafd 80.8px)"></div>
<div class="r" style="left:29px;top:840.3599999999997px;width:1590px;height:26.66999999999996px;background:#fff"></div>
<div class="t" style="left:34.50px;top:846px;font-size:11.65px;line-height:13px;color:#3d9af2;transform:scaleY(1.079);transform-origin:0 11px;">00000000789789789</div>
<div class="t" style="left:252.00px;top:846px;font-size:11.65px;line-height:13px;color:#444;transform:scaleY(1.079);transform-origin:0 11px;"></div>
<div class="t" style="left:337.50px;width:400px;text-align:center;top:846px;font-size:11.65px;line-height:13px;color:#444;transform:scaleY(1.079);transform-origin:0 11px;">1</div>
<div class="t" style="left:305.50px;width:400px;text-align:right;top:846px;font-size:11.65px;line-height:13px;color:#444;transform:scaleY(1.079);transform-origin:0 11px;">$12.00</div>
<div class="t" style="left:418.50px;width:400px;text-align:right;top:846px;font-size:11.65px;line-height:13px;color:#444;transform:scaleY(1.079);transform-origin:0 11px;">$12.00</div>
<div class="t" style="left:550.50px;width:400px;text-align:right;top:846px;font-size:11.65px;line-height:13px;color:#444;transform:scaleY(1.079);transform-origin:0 11px;">$10.0000</div>
<div class="t" style="left:668.50px;width:400px;text-align:right;top:846px;font-size:11.65px;line-height:13px;color:#444;transform:scaleY(1.079);transform-origin:0 11px;">$0.00</div>
<div class="t" style="left:799.50px;width:400px;text-align:right;top:846px;font-size:11.65px;line-height:13px;color:#444;transform:scaleY(1.079);transform-origin:0 11px;">$10.0000</div>
<div class="t" style="left:914.50px;width:400px;text-align:right;top:846px;font-size:11.65px;line-height:13px;color:#444;transform:scaleY(1.079);transform-origin:0 11px;">$10.0000</div>
<div class="t" style="left:1027.50px;width:400px;text-align:right;top:846px;font-size:11.65px;line-height:13px;color:#444;transform:scaleY(1.079);transform-origin:0 11px;">$0.00</div>
<div class="t" style="left:1126.50px;width:400px;text-align:right;top:846px;font-size:11.65px;line-height:13px;color:#444;transform:scaleY(1.079);transform-origin:0 11px;">$2.00</div>
<div class="t" style="left:1213.50px;width:400px;text-align:right;top:846px;font-size:11.65px;line-height:13px;color:#444;transform:scaleY(1.079);transform-origin:0 11px;">16.67%</div>
<div class="r" style="left:252px;top:845px;width:109px;height:15px;background:linear-gradient(rgba(255,255,255,0.35),rgba(255,255,255,0) 35%,rgba(255,255,255,0) 65%,rgba(255,255,255,0.35)),linear-gradient(90deg,#d4e7fd 0.0px,#b9dafd 11.9px,#d4e7fd 30.9px,#d4e7fd 44.1px,#d4e7fd 62.9px,#d4e7fd 74.3px,#b9dafd 85.2px,#d4e7fd 101.3px)"></div>
<div class="r" style="left:29px;top:653px;width:1590px;height:1px;background:#dddddd"></div>
<div class="r" style="left:29px;top:680px;width:1590px;height:1px;background:#dddddd"></div>
<div class="r" style="left:29px;top:706px;width:1590px;height:1px;background:#dddddd"></div>
<div class="r" style="left:29px;top:733px;width:1590px;height:1px;background:#dddddd"></div>
<div class="r" style="left:29px;top:760px;width:1590px;height:1px;background:#dddddd"></div>
<div class="r" style="left:29px;top:786px;width:1590px;height:1px;background:#dddddd"></div>
<div class="r" style="left:29px;top:813px;width:1590px;height:1px;background:#dddddd"></div>
<div class="r" style="left:29px;top:840px;width:1590px;height:1px;background:#dddddd"></div>
<div class="r" style="left:29px;top:866px;width:1590px;height:1px;background:#dddddd"></div>
<div class="r" style="left:246px;top:627px;width:1px;height:240.02999999999963px;background:#dddddd"></div>
<div class="r" style="left:488px;top:627px;width:1px;height:240.02999999999963px;background:#dddddd"></div>
<div class="r" style="left:586px;top:627px;width:1px;height:240.02999999999963px;background:#dddddd"></div>
<div class="r" style="left:710px;top:627px;width:1px;height:240.02999999999963px;background:#dddddd"></div>
<div class="r" style="left:823px;top:627px;width:1px;height:240.02999999999963px;background:#dddddd"></div>
<div class="r" style="left:955px;top:627px;width:1px;height:240.02999999999963px;background:#dddddd"></div>
<div class="r" style="left:1073px;top:627px;width:1px;height:240.02999999999963px;background:#dddddd"></div>
<div class="r" style="left:1204px;top:627px;width:1px;height:240.02999999999963px;background:#dddddd"></div>
<div class="r" style="left:1319px;top:627px;width:1px;height:240.02999999999963px;background:#dddddd"></div>
<div class="r" style="left:1432px;top:627px;width:1px;height:240.02999999999963px;background:#dddddd"></div>
<div class="r" style="left:1531px;top:627px;width:1px;height:240.02999999999963px;background:#dddddd"></div>
<div class="r" style="left:29px;top:627px;width:1px;height:240.02999999999963px;background:#dddddd"></div>
<div class="r" style="left:1618px;top:627px;width:1px;height:240.02999999999963px;background:#dddddd"></div>
<div class="r" style="left:1px;top:3px;width:1650px;height:859px;border:1px solid #d2d0d2;border-radius:4px;box-shadow:0 0 0 1px rgba(0,0,0,0.1),inset 0 0 0 1px rgba(0,0,0,0.07)"></div>
</body></html>
